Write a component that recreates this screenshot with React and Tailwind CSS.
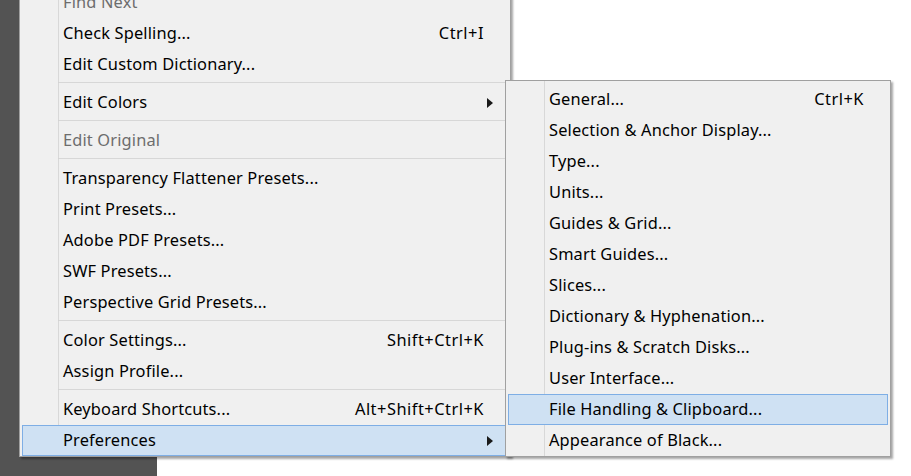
const font = { fontFamily: '"Noto Sans", "Open Sans", sans-serif' };

const mainItems = [
  { label: 'Find Next', disabled: true },
  { label: 'Check Spelling...', shortcut: 'Ctrl+I' },
  { label: 'Edit Custom Dictionary...' },
  { sep: true },
  { label: 'Edit Colors', submenu: true },
  { sep: true },
  { label: 'Edit Original', disabled: true },
  { sep: true },
  { label: 'Transparency Flattener Presets...' },
  { label: 'Print Presets...' },
  { label: 'Adobe PDF Presets...' },
  { label: 'SWF Presets...' },
  { label: 'Perspective Grid Presets...' },
  { sep: true },
  { label: 'Color Settings...', shortcut: 'Shift+Ctrl+K' },
  { label: 'Assign Profile...' },
  { sep: true },
  { label: 'Keyboard Shortcuts...', shortcut: 'Alt+Shift+Ctrl+K' },
  { label: 'Preferences', submenu: true, active: true },
];

const prefItems = [
  { label: 'General...', shortcut: 'Ctrl+K' },
  { label: 'Selection & Anchor Display...' },
  { label: 'Type...' },
  { label: 'Units...' },
  { label: 'Guides & Grid...' },
  { label: 'Smart Guides...' },
  { label: 'Slices...' },
  { label: 'Dictionary & Hyphenation...' },
  { label: 'Plug-ins & Scratch Disks...' },
  { label: 'User Interface...' },
  { label: 'File Handling & Clipboard...', active: true },
  { label: 'Appearance of Black...' },
];

function Arrow() {
  return (
    <svg width="6" height="10" viewBox="0 0 6 10" className="absolute right-[14px] top-[10px]">
      <path d="M0 0 L6 5 L0 10 Z" fill="#1a1a1a" />
    </svg>
  );
}

function MenuItem({ item }) {
  if (item.sep) {
    return <div className="ml-[38px] mt-[2px] mb-[4px] h-px bg-[#d7d7d7]" />;
  }
  return (
    <div
      className={`relative mx-[2px] flex h-[31px] items-center pl-[40px] pr-[23px] text-[16.4px] ${
        item.active ? 'border border-[#7eaee5] bg-[#cfe1f3]' : 'border border-transparent'
      } ${item.disabled ? 'text-[#6d6d6d]' : 'text-black'}`}
    >
      <span className="flex-1 whitespace-nowrap tracking-[0.15px]">{item.label}</span>
      {item.shortcut && <span className="whitespace-nowrap tracking-[0.5px]">{item.shortcut}</span>}
      {item.submenu && <Arrow />}
    </div>
  );
}

function Menu({ items, className }) {
  return (
    <div
      className={`absolute border border-[#a0a0a0] bg-[#f0f0f0] shadow-[2px_2px_2px_rgba(0,0,0,0.35)] ${className}`}
    >
      <div className="pointer-events-none absolute bottom-0 left-[38px] top-0 w-px bg-[#d2d2d2]/80" />
      {items.map((item, i) => (
        <MenuItem key={i} item={item} />
      ))}
    </div>
  );
}

export default function App() {
  return (
    <div className="relative h-[476px] w-[911px] overflow-hidden bg-white" style={font}>
      <div className="h-full w-[157px] bg-[#535353]" />
      <Menu items={mainItems} className="left-[19px] top-[-16px] w-[492px] pt-[2px]" />
      <Menu items={prefItems} className="left-[505px] top-[80px] w-[386px] pt-[3px]" />
    </div>
  );
}
